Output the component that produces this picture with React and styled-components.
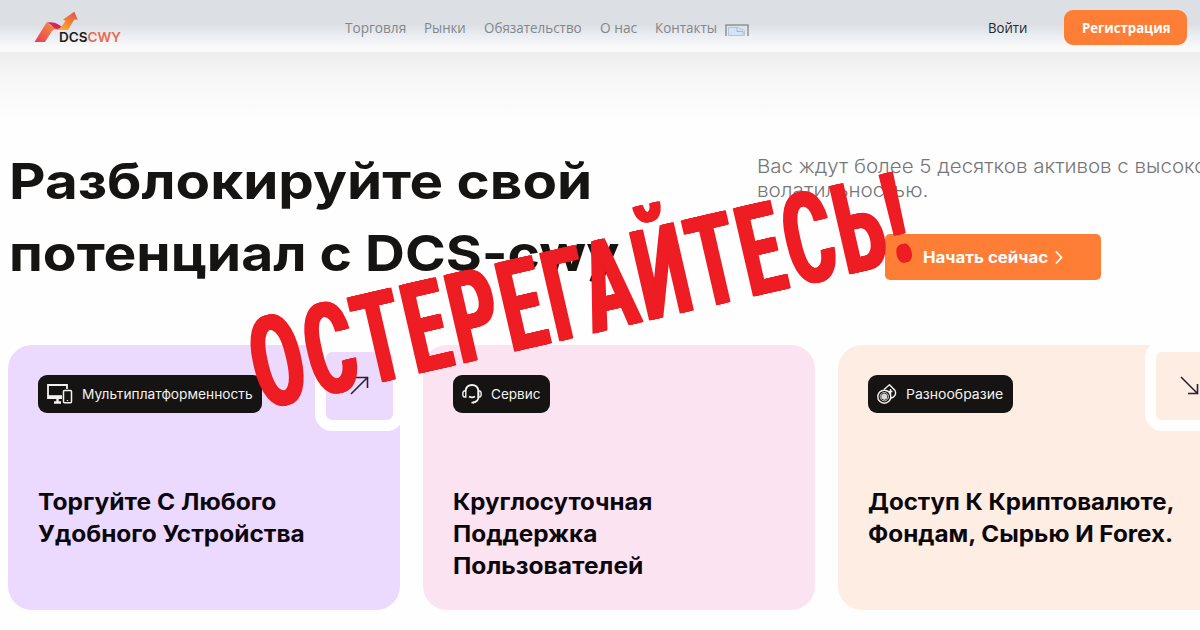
import { useLayoutEffect, useRef, useState } from "react";
import styled, { createGlobalStyle } from "styled-components";

const GlobalStyle = createGlobalStyle`
  * {
    box-sizing: border-box;
  }
  body {
    margin: 0;
    overflow: hidden;
    background: #fefefe;
  }
`;

const Page = styled.div`
  position: relative;
  display: flex;
  flex-direction: column;
  width: 1200px;
  height: 630px;
  overflow: hidden;
  background: linear-gradient(#ececec 50px, #f7f7f7 78px, #fefefe 125px);
  font-family: "Inter", "Liberation Sans", sans-serif;
  color: #151413;
`;

const FitBox = styled.span`
  display: block;
  flex: none;
  width: ${(p) => p.$width}px;
  white-space: nowrap;
  text-align: left;
`;

const FitInner = styled.span`
  display: inline-block;
  transform-origin: 0 50%;
`;

const Header = styled.header`
  display: flex;
  align-items: flex-start;
  height: 52px;
  flex: none;
  padding-left: 34px;
  background: linear-gradient(
    #dce0e5 0,
    #dce0e5 25px,
    #eceff3 37px,
    #fafafa 48px,
    #fafafa 52px
  );
`;

const Logo = styled.div`
  display: flex;
  align-items: flex-end;
  width: 311px;
  height: 44px;
`;

const LogoMark = styled.svg`
  width: 46px;
  height: 34px;
  margin-right: -21px;
  flex: none;
`;

const LogoText = styled.div`
  position: relative;
  font-size: 13.5px;
  line-height: 14px;
  font-weight: 600;
  color: #1c1c20;
`;

const LogoAccent = styled.span`
  color: #ea6a4c;
`;

const Nav = styled.nav`
  display: flex;
  gap: 18px;
  width: 643px;
  padding-top: 18px;
  font-family: "Open Sans", "Noto Sans", sans-serif;
  font-size: 14.5px;
  line-height: 20px;
  color: #83868a;
`;

const Flag = styled.svg`
  width: 24px;
  height: 12px;
  margin: 6px 0 0 -10px;
`;

const Login = styled.div`
  width: 76px;
  padding-top: 18px;
  font-family: "Open Sans", "Noto Sans", sans-serif;
  font-size: 14.5px;
  line-height: 20px;
  color: #25272a;
`;

const Register = styled.button`
  display: flex;
  justify-content: center;
  align-items: center;
  width: 123px;
  height: 35px;
  margin-top: 10px;
  padding: 0;
  border: 0;
  border-radius: 9px;
  background: #ff7e36;
  color: #fff;
  font-family: "Open Sans", "Noto Sans", sans-serif;
  font-size: 14.5px;
  font-weight: 700;
`;

const Hero = styled.section`
  display: flex;
  height: 293px;
  flex: none;
`;

const Title = styled.h1`
  width: 757px;
  margin: 0;
  padding: 93px 0 0 9px;
  flex: none;
  font-size: 50px;
  line-height: 72px;
  font-weight: 650;
`;

const Intro = styled.div`
  flex: none;
  padding-top: 103px;
`;

const Lead = styled.p`
  margin: 0;
  font-size: 19px;
  line-height: 24px;
  font-weight: 300;
  color: #777;
`;

const Start = styled.button`
  display: flex;
  align-items: center;
  gap: 7px;
  width: 216px;
  height: 46px;
  margin: 31px 0 0 128px;
  padding: 0 0 0 38px;
  border: 0;
  border-radius: 5px;
  background: #ff7e36;
  color: #fff;
  font-family: inherit;
  font-size: 15.5px;
  font-weight: 700;
`;

const Cards = styled.section`
  display: flex;
  gap: 23px;
  padding-left: 8px;
`;

const Card = styled.article`
  position: relative;
  flex: none;
  width: 392px;
  height: 265px;
  padding: 30px;
  border-radius: 24px;
  background: ${(p) => p.$bg};
`;

const Badge = styled.div`
  display: flex;
  align-items: center;
  width: ${(p) => p.$width}px;
  height: 38px;
  padding-left: 9px;
  gap: 9px;
  border-radius: 9px;
  background: #151412;
  color: #f3f2f1;
  font-size: 13px;
  svg {
    flex: none;
  }
`;

const CardTitle = styled.h2`
  margin: 73px 0 0 -0.5px;
  font-size: 22.5px;
  line-height: 32px;
  font-weight: 680;
  color: #0b080d;
`;

const Corner = styled.div`
  position: absolute;
  top: -4px;
  right: -4px;
  display: flex;
  width: 89px;
  height: 90px;
  padding: 24px 0 0 24px;
  border: 11px solid #fefefe;
  border-radius: 17px;
  background: ${(p) => p.$bg};
`;

const Warning = styled.div`
  position: absolute;
  left: 243px;
  top: 324px;
  transform: rotate(-13deg);
  transform-origin: 0 0;
  font-family: "Roboto", sans-serif;
  font-size: 127px;
  line-height: 90px;
  font-weight: 700;
  color: #ee1c23;
  text-shadow:
    2px 0 #ee1c23,
    -2px 0 #ee1c23,
    3.5px 0 #ee1c23,
    -3.5px 0 #ee1c23;
  letter-spacing: 9px;
`;

// squeezes or widens one line of text to a fixed width
function Fit({ width, children }) {
  const ref = useRef(null);
  const [scale, setScale] = useState(1);

  useLayoutEffect(() => {
    setScale(width / ref.current.offsetWidth);
  }, [width]);

  return (
    <FitBox $width={width}>
      <FitInner ref={ref} style={{ transform: `scaleX(${scale})` }}>
        {children}
      </FitInner>
    </FitBox>
  );
}

const links = [
  ["Торговля", 61],
  ["Рынки", 42],
  ["Обязательство", 98],
  ["О нас", 37],
  ["Контакты", 62],
];

const DevicesIcon = () => (
  <svg width="26" height="20" viewBox="0 0 26 20" fill="none" stroke="#f3f2f1">
    <path d="M15 14H1V1h19v4" strokeWidth="1.8" />
    <path d="M1 12.7h14" strokeWidth="3" />
    <path d="M7 18.5h7M10.5 14v4" strokeWidth="2.4" />
    <rect x="16.5" y="6.5" width="8" height="12.3" rx="1" strokeWidth="1.5" />
    <path d="M19.8 16.6h1.4" />
  </svg>
);

const HeadsetIcon = () => (
  <svg width="20" height="20" viewBox="0 0 20 20" fill="none" stroke="#f3f2f1">
    <path d="M3.5 7C4 3.2 6.5 1 10 1s6 2.2 6.5 6v6c0 3-2 5-5.500 5.500" strokeWidth="1.8" />
    <path d="M3.8 7H2.5C1.5 7 .8 8 .8 10s.7 3 1.7 3h1.3zM16.2 7h1.3c1 0 1.7 1 1.7 3s-.7 3-1.7 3h-1.3z" strokeWidth="1.4" />
    <path d="M7 12.500c2 1.300 4 1.300 6 0M9.500 18.600h2.500" strokeWidth="1.7" />
  </svg>
);

const CoinsIcon = () => (
  <svg width="20" height="20" viewBox="0 0 20 20" fill="none" stroke="#f3f2f1">
    <path d="M7 5.5 12.5.8 18 6.5c1.6 3.5-.5 7-4 7.5" strokeWidth="1.4" />
    <circle cx="7.3" cy="12.7" r="6.5" strokeWidth="1.4" />
    <circle cx="7.3" cy="12.7" r="4.2" strokeWidth="0.8" />
    <path d="m7.3 9.3 3 1.7v3.4l-3 1.7-3-1.7V11z" fill="#d8d7d6" stroke="none" />
    <path d="M13.5 5v6M11.5 7.5h4" strokeWidth="1.4" />
  </svg>
);

const cards = [
  {
    bg: "#ecdafe",
    icon: <DevicesIcon />,
    label: "Мультиплатформенность",
    labelWidth: 171,
    badge: 224,
    lines: [
      ["Торгуйте С Любого", 238],
      ["Удобного Устройства", 267],
    ],
    arrow: "M1 18 18 1M5 1.5H17.5V12",
  },
  {
    bg: "#fce3f1",
    icon: <HeadsetIcon />,
    label: "Сервис",
    labelWidth: 50,
    badge: 97,
    lines: [
      ["Круглосуточная", 199],
      ["Поддержка", 144],
      ["Пользователей", 190],
    ],
  },
  {
    bg: "#feede2",
    icon: <CoinsIcon />,
    label: "Разнообразие",
    labelWidth: 97,
    badge: 145,
    lines: [
      ["Доступ К Криптовалюте,", 306],
      ["Фондам, Сырью И Forex.", 305],
    ],
    arrow: "M1 1l17 17M17.5 8v9.5H8",
  },
];

export default function App() {
  return (
    <>
      <GlobalStyle />
      <Page>
        <Header>
          <Logo>
            <LogoMark viewBox="0 0 46 34">
              <defs>
                <linearGradient id="rise" x1="0" y1="1" x2="1" y2="0">
                  <stop offset="0" stopColor="#e8365f" />
                  <stop offset="1" stopColor="#f99a31" />
                </linearGradient>
                <linearGradient id="tip" x1="0" y1="1" x2="0.6" y2="0">
                  <stop offset="0" stopColor="#fbb328" />
                  <stop offset="1" stopColor="#ea5947" />
                </linearGradient>
              </defs>
              <path d="M.5 32 12.5 12.5 22 18 18 21 11 32z" fill="url(#rise)" />
              <path d="M25 20 31.5 11l-2.500-1.500L40.300 1.700l3.500 8-3.500-.2L34 20z" fill="url(#tip)" />
              <path d="M19 18q5 2 8.5-2l2 4H22z" fill="#fbab2a" />
              <path d="M12.5 12.5q8-1 11 1.5l4 2.500q-2.500 3.500-7 2-3-4.500-8-6z" fill="#d52362" />
            </LogoMark>
            <LogoText>
              <Fit width={62}>
                DCS<LogoAccent>CWY</LogoAccent>
              </Fit>
            </LogoText>
          </Logo>
          <Nav>
            {links.map(([text, width]) => (
              <Fit key={text} width={width}>
                {text}
              </Fit>
            ))}
            <Flag viewBox="0 0 24 12" fill="none">
              <path d="M1 12V1h22v11" stroke="#8b929b" strokeWidth="1.5" />
              <path d="M3.5 3.5h9l7 3v5h-16z" fill="#d6e3f3" stroke="#b8c5d5" />
              <path d="M12 3.5v4h6v3" stroke="#a9b6c6" />
            </Flag>
          </Nav>
          <Login>
            <Fit width={39}>Войти</Fit>
          </Login>
          <Register>
            <Fit width={88}>Регистрация</Fit>
          </Register>
        </Header>

        <Hero>
          <Title>
            <Fit width={583}>Разблокируйте свой</Fit>
            <Fit width={610}>потенциал с DCS-cwy</Fit>
          </Title>
          <Intro>
            <Lead>
              <Fit width={461}>Вас ждут более 5 десятков активов с высокой</Fit>
              <Fit width={171}>волатильностью.</Fit>
            </Lead>
            <Start>
              <Fit width={125}>Начать сейчас</Fit>
              <svg width="8" height="15" viewBox="0 0 8 15" fill="none">
                <path d="M1 1.5 6.5 7.5 1 13.5" stroke="#fff" strokeWidth="1.8" />
              </svg>
            </Start>
          </Intro>
        </Hero>

        <Cards>
          {cards.map((card) => (
            <Card key={card.label} $bg={card.bg}>
              <Badge $width={card.badge}>
                {card.icon}
                <Fit width={card.labelWidth}>{card.label}</Fit>
              </Badge>
              <CardTitle>
                {card.lines.map(([text, width]) => (
                  <Fit key={text} width={width}>
                    {text}
                  </Fit>
                ))}
              </CardTitle>
              {card.arrow && (
                <Corner $bg={card.bg}>
                  <svg width="19" height="19" viewBox="0 0 19 19" fill="none">
                    <path d={card.arrow} stroke="#29222f" strokeWidth="1.6" />
                  </svg>
                </Corner>
              )}
            </Card>
          ))}
        </Cards>

        <Warning>
          <Fit width={675}>ОСТЕРЕГАЙТЕСЬ!</Fit>
        </Warning>
      </Page>
    </>
  );
}
